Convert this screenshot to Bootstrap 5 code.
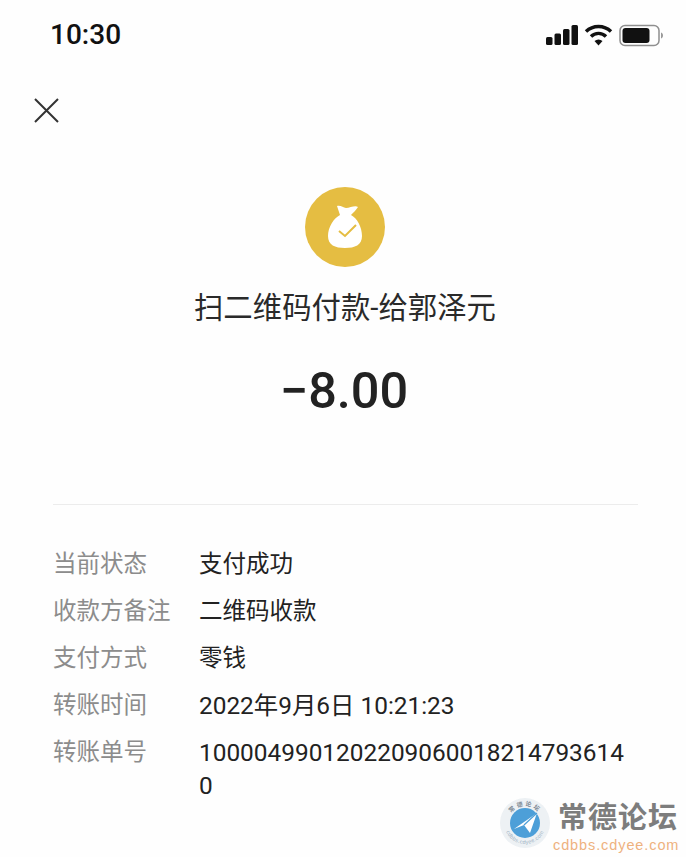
<!DOCTYPE html>
<html lang="zh-CN">

<head>
    <meta charset="UTF-8">
    <title>账单详情</title>
    <link href="https://cdn.jsdelivr.net/npm/bootstrap@5.3.0/dist/css/bootstrap.min.css" rel="stylesheet">
    <style>
        body { background: #fefefe; color: #1e1e1e; font-family: Roboto, "Noto Sans CJK SC", sans-serif; min-height: 857px; position: relative; }
        .status-row { height: 68px; padding: 16px 22px 0 50px; }
        .status-row svg { margin-top: 7px; }
        .clock { font: 500 28px/38px Roboto, sans-serif; color: #111; }
        .close-wrap { padding: 30px 0 0 34px; height: 119px; }
        .pay-head { height: 317px; padding-left: 4px; }
        .coin { width: 80px; height: 80px; border-radius: 50%; background: #e5bd42; }
        .pay-title { font-size: 29.4px; line-height: 40px; margin-top: 21px; color: #2a2a2a; }
        .pay-sum { font: 500 50.500px/60px Roboto, sans-serif; margin-top: 33px; margin-right: 2px; color: #222; }
        .split-line { margin: 0 48px 0 53px; height: 1px; background: #ececec; }
        .info-list { padding: 43px 55px 0 53px; }
        .info-row { display: flex; font-size: 23.5px; line-height: 33px; margin-bottom: 14px; }
        .info-key { width: 146px; flex: none; color: #8c8c8c; white-space: nowrap; }
        .info-val { word-break: break-all; color: #222; }
        .info-num { font-size: 24.4px; }
        .water-mark { position: absolute; left: 499px; right: 0; top: 797px; gap: 2px; }
        .water-name { font: 700 29px/36px "Noto Sans CJK SC", sans-serif; color: #7d7d7d; letter-spacing: 1px; margin-left: 5px; }
        .water-url { font: 400 14.5px/18px "Liberation Sans", sans-serif; color: #eeb27f; letter-spacing: .9px; margin-top: 3px; white-space: nowrap; }
    </style>
</head>

<body>
    <!-- barra de estado -->
    <div class="status-row d-flex justify-content-between align-items-start">
        <span class="clock">10:30</span>
        <svg width="118" height="24" viewBox="0 0 118 24">
            <g fill="#111">
                <rect x="0" y="14" width="6.500" height="8" rx="1.500"/>
                <rect x="8.500" y="10.500" width="6.500" height="11.500" rx="1.500"/>
                <rect x="17" y="6" width="6.500" height="16" rx="1.500"/>
                <rect x="25.500" y="2" width="6.500" height="20" rx="1.500"/>
            </g>
            <g fill="none" stroke="#111" stroke-width="3.400">
                <path d="M40 8.500a18 18 0 0 1 25 0"/>
                <path d="M45 13.500a10.500 10.500 0 0 1 15 0"/>
            </g>
            <path d="M48.500 18a6 6 0 0 1 8 0l-4 4.500z" fill="#111"/>
            <rect x="74" y="2.500" width="39" height="20" rx="5" fill="none" stroke="#8f8f8f" stroke-width="1.500"/>
            <rect x="76.500" y="5" width="27" height="15" rx="3" fill="#111"/>
            <path d="M115 9.500v6c1.500-.5 2-1.800 2-3s-.5-2.500-2-3z" fill="#9a9a9a"/>
        </svg>
    </div>

    <div class="close-wrap">
        <svg width="25" height="25" viewBox="0 0 25 25" class="d-block">
            <path d="M1 1l23 23M24 1L1 24" stroke="#333" stroke-width="2" fill="none"/>
        </svg>
    </div>

    <div class="pay-head d-flex flex-column align-items-center">
        <div class="coin d-flex align-items-center justify-content-center">
            <svg width="34" height="44" viewBox="0 0 34 44">
                <path d="M9 1C13 0 15 3 18 3C22 3 27 0 30 2C28 5 25 8 23 10C29 13 34 22 34 31C34 40 27 43 17 43C7 43 0 40 0 31C0 22 6 13 12 10C11 7 10 4 9 1z" fill="#fff"/>
                <path d="M11 26l6 5 11-11" fill="none" stroke="#e5bd42" stroke-width="2"/>
            </svg>
        </div>
        <div class="pay-title">扫二维码付款-给郭泽元</div>
        <div class="pay-sum">−8.00</div>
    </div>

    <div class="split-line"></div>

    <div class="info-list">
        <div class="info-row"><div class="info-key">当前状态</div><div class="info-val">支付成功</div></div>
        <div class="info-row"><div class="info-key">收款方备注</div><div class="info-val">二维码收款</div></div>
        <div class="info-row"><div class="info-key">支付方式</div><div class="info-val">零钱</div></div>
        <div class="info-row"><div class="info-key">转账时间</div><div class="info-val info-num">2022年9月6日 10:21:23</div></div>
        <div class="info-row"><div class="info-key">转账单号</div><div class="info-val info-num">10000499012022090600182147936140</div></div>
    </div>

    <!-- marca de agua -->
    <div class="water-mark d-flex align-items-start">
        <svg width="52" height="52" viewBox="0 0 52 52" class="flex-shrink-0">
            <defs>
                <path id="ringTop" d="M9 26a17 17 0 0 1 34 0"/>
                <path id="ringBottom" d="M5 26a21 21 0 0 0 42 0"/>
            </defs>
            <circle cx="26" cy="26" r="25" fill="#edf1f4"/>
            <circle cx="26" cy="26" r="15" fill="#4d9fd8"/>
            <path d="M15 32l23-16-7 20-6-8z" fill="#fff"/>
            <path d="M25 28l13-12" stroke="#4d9fd8" stroke-width="1.200"/>
            <text font-size="6" font-weight="700" fill="#7f8a94" font-family="Noto Sans CJK SC, sans-serif" letter-spacing="2" text-anchor="middle"><textPath href="#ringTop" startOffset="50%">常德论坛</textPath></text>
            <text font-size="5.500" fill="#9fb2c4" font-family="Liberation Sans, sans-serif" letter-spacing=".3" text-anchor="middle"><textPath href="#ringBottom" startOffset="50%">cdbbs.cdyee.com</textPath></text>
        </svg>
        <div>
            <div class="water-name">常德论坛</div>
            <div class="water-url">cdbbs.cdyee.com</div>
        </div>
    </div>
</body>

</html>
